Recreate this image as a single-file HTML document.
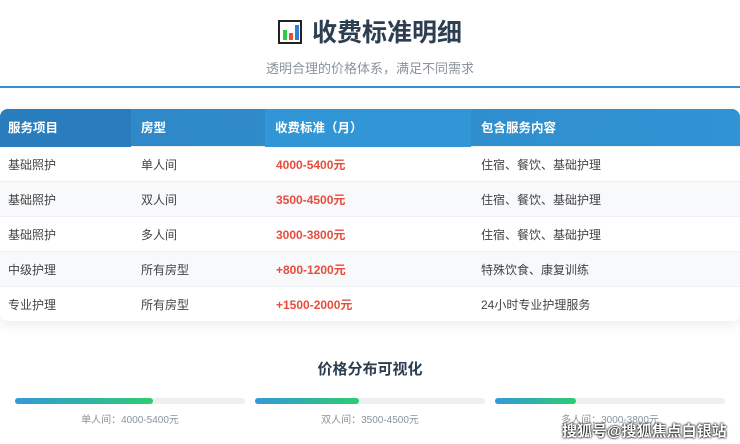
<!DOCTYPE html>
<html><head><meta charset="utf-8"><style>
*{margin:0;padding:0;box-sizing:border-box}
body{width:740px;height:444px;background:#fff;font-family:"Liberation Sans","Noto Sans CJK SC",sans-serif;position:relative;overflow:hidden}
.t{position:absolute;left:0;width:740px;text-align:center}
h1{position:absolute;top:13px;left:0;width:740px;text-align:center;font-size:25px;color:#2c3e50;font-weight:bold}
.sub{top:58px;font-size:13px;color:#8a939c}
.line{position:absolute;top:86px;left:0;width:740px;height:2px;background:#3a8fd0}
.tbl{position:absolute;top:109px;left:0;width:740px;height:212px;border-radius:8px;overflow:hidden;box-shadow:0 4px 14px rgba(0,0,0,.08)}
.row{display:flex;height:35px;align-items:center;font-size:12px;color:#444;border-bottom:1px solid #eef0f3}
.row div{padding-left:10px}
.row .c1{padding-left:8px}
.c1{width:131px}.c2{width:134px}.c3{width:206px}.c4{flex:1}
.hd{height:38px;background:linear-gradient(90deg,#2f86c6,#3093d3);color:#fff;font-weight:bold;font-size:12.5px}
.hd div{height:38px;line-height:38px}
.hd .c1{background:#2a7dbd}.hd .c3{background:#3196d6}
.alt{background:#f7f9fb}
.p{color:#e74c3c;font-weight:bold;font-size:12px;padding-left:11px!important}
.bar{position:absolute;top:398px;width:230px;height:6px;border-radius:3px;background:#ecf0f1}
.bar i{display:block;height:6px;border-radius:3px;background:linear-gradient(90deg,#3498db,#2ecc71)}
.lb{position:absolute;top:411px;width:230px;text-align:center;font-size:10px;color:#8a939c}
</style></head><body>
<h1><span style="display:inline-block;width:24px;height:24px;border:2px solid #222;background:#fff;vertical-align:-3px;margin-right:10px;position:relative"><i style="position:absolute;left:3px;bottom:2px;width:4px;height:10px;background:#2ecc40"></i><i style="position:absolute;left:9px;bottom:2px;width:4px;height:7px;background:#e8502f"></i><i style="position:absolute;left:15px;bottom:2px;width:4px;height:15px;background:#2f7fd8"></i></span>收费标准明细</h1>
<div class="t sub">透明合理的价格体系，满足不同需求</div>
<div class="line"></div>
<div class="tbl">
<div class="row hd"><div class="c1">服务项目</div><div class="c2">房型</div><div class="c3">收费标准（月）</div><div class="c4">包含服务内容</div></div>
<div class="row"><div class="c1">基础照护</div><div class="c2">单人间</div><div class="c3 p">4000-5400元</div><div class="c4">住宿、餐饮、基础护理</div></div>
<div class="row alt"><div class="c1">基础照护</div><div class="c2">双人间</div><div class="c3 p">3500-4500元</div><div class="c4">住宿、餐饮、基础护理</div></div>
<div class="row"><div class="c1">基础照护</div><div class="c2">多人间</div><div class="c3 p">3000-3800元</div><div class="c4">住宿、餐饮、基础护理</div></div>
<div class="row alt"><div class="c1">中级护理</div><div class="c2">所有房型</div><div class="c3 p">+800-1200元</div><div class="c4">特殊饮食、康复训练</div></div>
<div class="row" style="border:0"><div class="c1">专业护理</div><div class="c2">所有房型</div><div class="c3 p">+1500-2000元</div><div class="c4">24小时专业护理服务</div></div>
</div>
<div class="t" style="top:358px;font-size:15px;font-weight:bold;color:#2c3e50">价格分布可视化</div>
<div class="bar" style="left:15px"><i style="width:60%"></i></div>
<div class="bar" style="left:255px"><i style="width:45%"></i></div>
<div class="bar" style="left:495px"><i style="width:35%"></i></div>
<div class="lb" style="left:15px">单人间：4000-5400元</div>
<div class="lb" style="left:255px">双人间：3500-4500元</div>
<div class="lb" style="left:495px">多人间：3000-3800元</div>
<div style="position:absolute;left:562px;top:420px;font-size:15px;font-weight:bold;color:#fff;text-shadow:0 0 2px #000,0 0 2px #000">搜狐号@搜狐焦点白银站</div>
</body></html>
